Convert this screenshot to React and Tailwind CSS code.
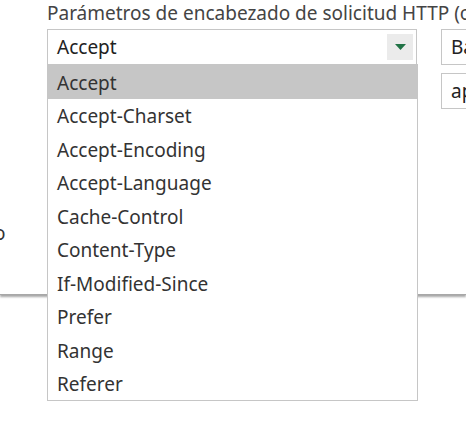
import { useState } from "react";

const options = [
  "Accept",
  "Accept-Charset",
  "Accept-Encoding",
  "Accept-Language",
  "Cache-Control",
  "Content-Type",
  "If-Modified-Since",
  "Prefer",
  "Range",
  "Referer",
];

const font = { fontFamily: '"Segoe UI", "Noto Sans", sans-serif' };

const App = () => {
  const [selected, setSelected] = useState("Accept");

  return (
    <div
      className="relative h-[421px] w-[466px] overflow-hidden bg-white"
      style={font}
    >
      {/* DIALOG */}
      <div className="h-[295px] border-b border-[#a8a8a8] bg-white shadow-[0_2px_2px_rgba(0,0,0,0.35)]">
        <div className="pl-[47px] text-[19px] leading-[26px] whitespace-nowrap text-[#444]">
          Parámetros de encabezado de solicitud HTTP (opcional)
        </div>

        <div className="mt-[3px] flex gap-[24px] pl-[47px]">
          {/* combo */}
          <div className="flex h-[36px] w-[370px] shrink-0 items-center border border-[#c6c6c6] bg-white pl-[9px] pr-[3px]">
            <span className="flex-1 text-[19px] text-[#222]">{selected}</span>
            <div className="flex h-[26px] w-[26px] items-center justify-center bg-[#ebebeb]">
              <svg width="11" height="6" viewBox="0 0 11 6">
                <path d="M0 0 H11 L5.5 6 Z" fill="#217346" />
              </svg>
            </div>
          </div>

          {/* right inputs */}
          <div className="flex shrink-0 flex-col gap-[8px]">
            <div className="flex h-[36px] w-[120px] items-center border border-[#c6c6c6] pl-[9px] text-[19px] text-[#222]">
              Basic
            </div>
            <div className="flex h-[36px] w-[120px] items-center border border-[#c6c6c6] pl-[9px] text-[19px] text-[#222]">
              application/json
            </div>
          </div>
        </div>

        <div className="mt-[110px] -ml-[6px] text-[19px] text-[#333]">o</div>
      </div>

      {/* DROPDOWN LIST */}
      <ul className="absolute left-[47px] top-[64px] w-[371px] border border-[#c6c6c6] bg-white">
        {options.map((opt) => (
          <li
            key={opt}
            onClick={() => setSelected(opt)}
            className={`flex h-[33.5px] items-center pl-[9px] pt-[2px] text-[19px] text-[#333] ${
              opt === selected ? "bg-[#c6c6c6]" : ""
            }`}
          >
            {opt}
          </li>
        ))}
      </ul>
    </div>
  );
};

export default App;
